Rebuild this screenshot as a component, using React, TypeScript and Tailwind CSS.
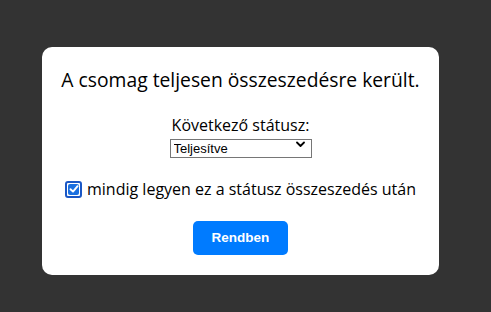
import React from 'react';

const CheckIcon: React.FC = () => (
  <span className="inline-flex items-center justify-center w-[17px] h-[17px] rounded-[3px] border-2 border-[#1a57c5] bg-white p-[1px] shrink-0">
    <span className="flex items-center justify-center w-full h-full rounded-[2px] bg-[#1a6fe0]">
      <svg width="10" height="10" viewBox="0 0 10 10" fill="none">
        <path d="M1.5 5.2 L4 7.6 L8.6 2.2" stroke="white" strokeWidth="1.9" strokeLinecap="round" strokeLinejoin="round" />
      </svg>
    </span>
  </span>
);

export default function App() {
  const [status, setStatus] = React.useState('Teljesítve');
  const [always, setAlways] = React.useState(true);

  return (
    <div className="w-[491px] h-[312px] bg-[#333333] pt-[47px] pl-[42px] font-['Open_Sans',sans-serif]">
      <div className="w-[397px] h-[228px] bg-white rounded-[10px] flex flex-col items-center pt-[19px] text-black">
        <h1 className="text-[19.3px] leading-[28px] font-normal">
          A csomag teljesen összeszedésre került.
        </h1>

        <div className="mt-[21px] flex flex-col items-center">
          <label className="text-[16px] leading-[20px]">Következő státusz:</label>
          <div className="relative">
            <select
              value={status}
              onChange={(e) => setStatus(e.target.value)}
              className="appearance-none w-[142px] h-[19px] border border-[#767676] bg-white pl-[3px] text-[13px] leading-[17px] font-['Liberation_Sans',Arial,sans-serif] outline-none"
            >
              <option>Teljesítve</option>
              <option>Feldolgozás alatt</option>
              <option>Szállítás alatt</option>
            </select>
            <svg
              className="absolute right-[7px] top-[6px] pointer-events-none"
              width="9"
              height="7"
              viewBox="0 0 9 7"
              fill="none"
            >
              <path d="M1 1.5 L4.5 5 L8 1.5" stroke="black" strokeWidth="1.8" strokeLinecap="round" strokeLinejoin="round" />
            </svg>
          </div>
        </div>

        <label
          className="mt-[19px] flex items-center gap-[5px] text-[16px] leading-[22px] cursor-pointer"
          onClick={() => setAlways(!always)}
        >
          {always ? (
            <CheckIcon />
          ) : (
            <span className="w-[17px] h-[17px] rounded-[3px] border border-[#767676] bg-white" />
          )}
          mindig legyen ez a státusz összeszedés után
        </label>

        <button className="mt-[21px] w-[95px] h-[34px] rounded-[5px] bg-[#007bff] text-white text-[13.5px] font-bold font-['Liberation_Sans',Arial,sans-serif]">
          Rendben
        </button>
      </div>
    </div>
  );
}
